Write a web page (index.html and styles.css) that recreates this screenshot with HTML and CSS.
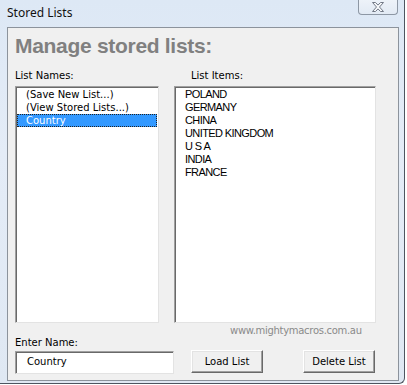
FILE: index.html
```html
<!DOCTYPE html>
<html lang="en">

<head>
    <meta charset="UTF-8">
    <title>Stored Lists</title>
    <link rel="stylesheet" href="styles.css">
</head>

<body>
    <div class="window">
        <div class="titlebar">
            <span class="title">Stored Lists</span>
            <div class="close">
                <svg width="16" height="12" viewBox="0 0 16 12">
                    <path d="M2.5 1.5h3l2.5 2.6 2.5-2.6h3l-4 4.5 4 4.5h-3L8 7.9l-2.5 2.6h-3l4-4.5z"
                        fill="#f7f9fb" stroke="#727986" stroke-width="1" stroke-linejoin="round" />
                </svg>
            </div>
        </div>

        <div class="client">
            <h1 class="heading">Manage stored lists:</h1>

            <div class="labels">
                <span class="lbl names-lbl">List Names:</span>
                <span class="lbl items-lbl">List Items:</span>
            </div>

            <div class="lists">
                <ul class="listbox names">
                    <li>(Save New List...)</li>
                    <li>(View Stored Lists...)</li>
                    <li class="selected">Country</li>
                </ul>
                <ul class="listbox items">
                    <li>POLAND</li>
                    <li>GERMANY</li>
                    <li>CHINA</li>
                    <li>UNITED KINGDOM</li>
                    <li>U S A</li>
                    <li>INDIA</li>
                    <li>FRANCE</li>
                </ul>
            </div>

            <div class="bottom">
                <div class="name-col">
                    <span class="lbl">Enter Name:</span>
                    <div class="textbox">Country</div>
                </div>
                <div class="btn-col">
                    <span class="url">www.mightymacros.com.au</span>
                    <div class="butonlar">
                        <button class="btn">Load List</button>
                        <button class="btn">Delete List</button>
                    </div>
                </div>
            </div>
        </div>
    </div>
</body>

</html>
```

FILE: styles.css
```css
body {
    margin: 0;
    background: #ffffff;
}

.window {
    width: 405px;
    height: 384px;
    box-sizing: border-box;
    padding: 0 5px 2px 7px;
    background: linear-gradient(#dde8f5, #e4ecf7 40%, #dfe8f3);
    border-right: 1px solid #4d5560;
    border-bottom: 1px solid #4d5560;
    border-bottom-right-radius: 6px;
    display: flex;
    flex-direction: column;
}

.titlebar {
    height: 27px;
    display: flex;
    justify-content: space-between;
    align-items: flex-start;
}

.title {
    font-family: "Noto Sans", sans-serif;
    font-size: 12px;
    line-height: 14px;
    margin-top: 6px;
    color: #111;
}

.close {
    width: 40px;
    height: 16px;
    margin-top: -1px;
    margin-right: 1px;
    box-sizing: border-box;
    border: 1px solid #8d97a4;
    border-top: none;
    border-radius: 0 0 4px 4px;
    background: linear-gradient(#eef3f9, #e2eaf4);
    display: flex;
    align-items: center;
    justify-content: center;
}

.client {
    flex: 1;
    background: #f0f0f0;
    border: 1px solid #8c939c;
    padding: 0 0 0 7px;
    font-family: "DejaVu Sans", sans-serif;
    font-size: 10px;
    color: #000;
}

.heading {
    margin: 0;
    padding-top: 6px;
    height: 31px;
    font-family: "Liberation Sans", Arial, sans-serif;
    font-size: 21px;
    line-height: 24px;
    letter-spacing: -0.3px;
    font-weight: bold;
    color: #808080;
}

.labels {
    display: flex;
    height: 17px;
    align-items: center;
    margin-top: 2px;
}

.lbl {
    line-height: 13px;
}

.names-lbl {
    width: 176px;
}

.lists {
    display: flex;
    gap: 15px;
    margin-top: 2px;
}

.listbox {
    list-style: none;
    margin: 0;
    padding: 0;
    height: 237px;
    box-sizing: border-box;
    background: #fff;
    border: 1px solid;
    border-color: #a0a0a0 #e3e3e3 #e3e3e3 #a0a0a0;
    box-shadow: inset 1px 1px 0 #696969, inset -1px -1px 0 #fff;
    padding: 1px;
}

.listbox li {
    height: 13px;
    line-height: 13px;
    white-space: nowrap;
}

.names {
    width: 144px;
}

.names li {
    padding-left: 9px;
}

.names li.selected {
    background: #3399ff;
    color: #fff;
    outline: 1px dotted #222;
    outline-offset: -1px;
}

.items {
    width: 202px;
    font-family: "Liberation Sans", Arial, sans-serif;
    font-size: 11px;
    letter-spacing: -0.6px;
}

.items li {
    padding-left: 9px;
}

.bottom {
    display: flex;
}

.name-col {
    width: 176px;
    display: flex;
    flex-direction: column;
    padding-top: 13px;
}

.textbox {
    width: 159px;
    height: 23px;
    box-sizing: border-box;
    margin-top: 2px;
    background: #fff;
    border: 1px solid;
    border-color: #a0a0a0 #e3e3e3 #e3e3e3 #a0a0a0;
    box-shadow: inset 1px 1px 0 #696969, inset -1px -1px 0 #fff;
    padding-left: 11px;
    line-height: 20px;
}

.btn-col {
    display: flex;
    flex-direction: column;
}

.url {
    color: #8a8a8a;
    padding-left: 39px;
    line-height: 13px;
    margin-top: 1px;
    letter-spacing: -0.3px;
}

.butonlar {
    display: flex;
    gap: 40px;
    margin-top: 13px;
}

.btn {
    width: 72px;
    height: 23px;
    margin: 0;
    padding: 0;
    background: #f0f0f0;
    font-family: "DejaVu Sans", sans-serif;
    font-size: 10px;
    color: #000;
    border: 1px solid;
    border-color: #fff #696969 #696969 #fff;
    box-shadow: inset -1px -1px 0 #a0a0a0, inset 1px 1px 0 #e3e3e3;
}
```
